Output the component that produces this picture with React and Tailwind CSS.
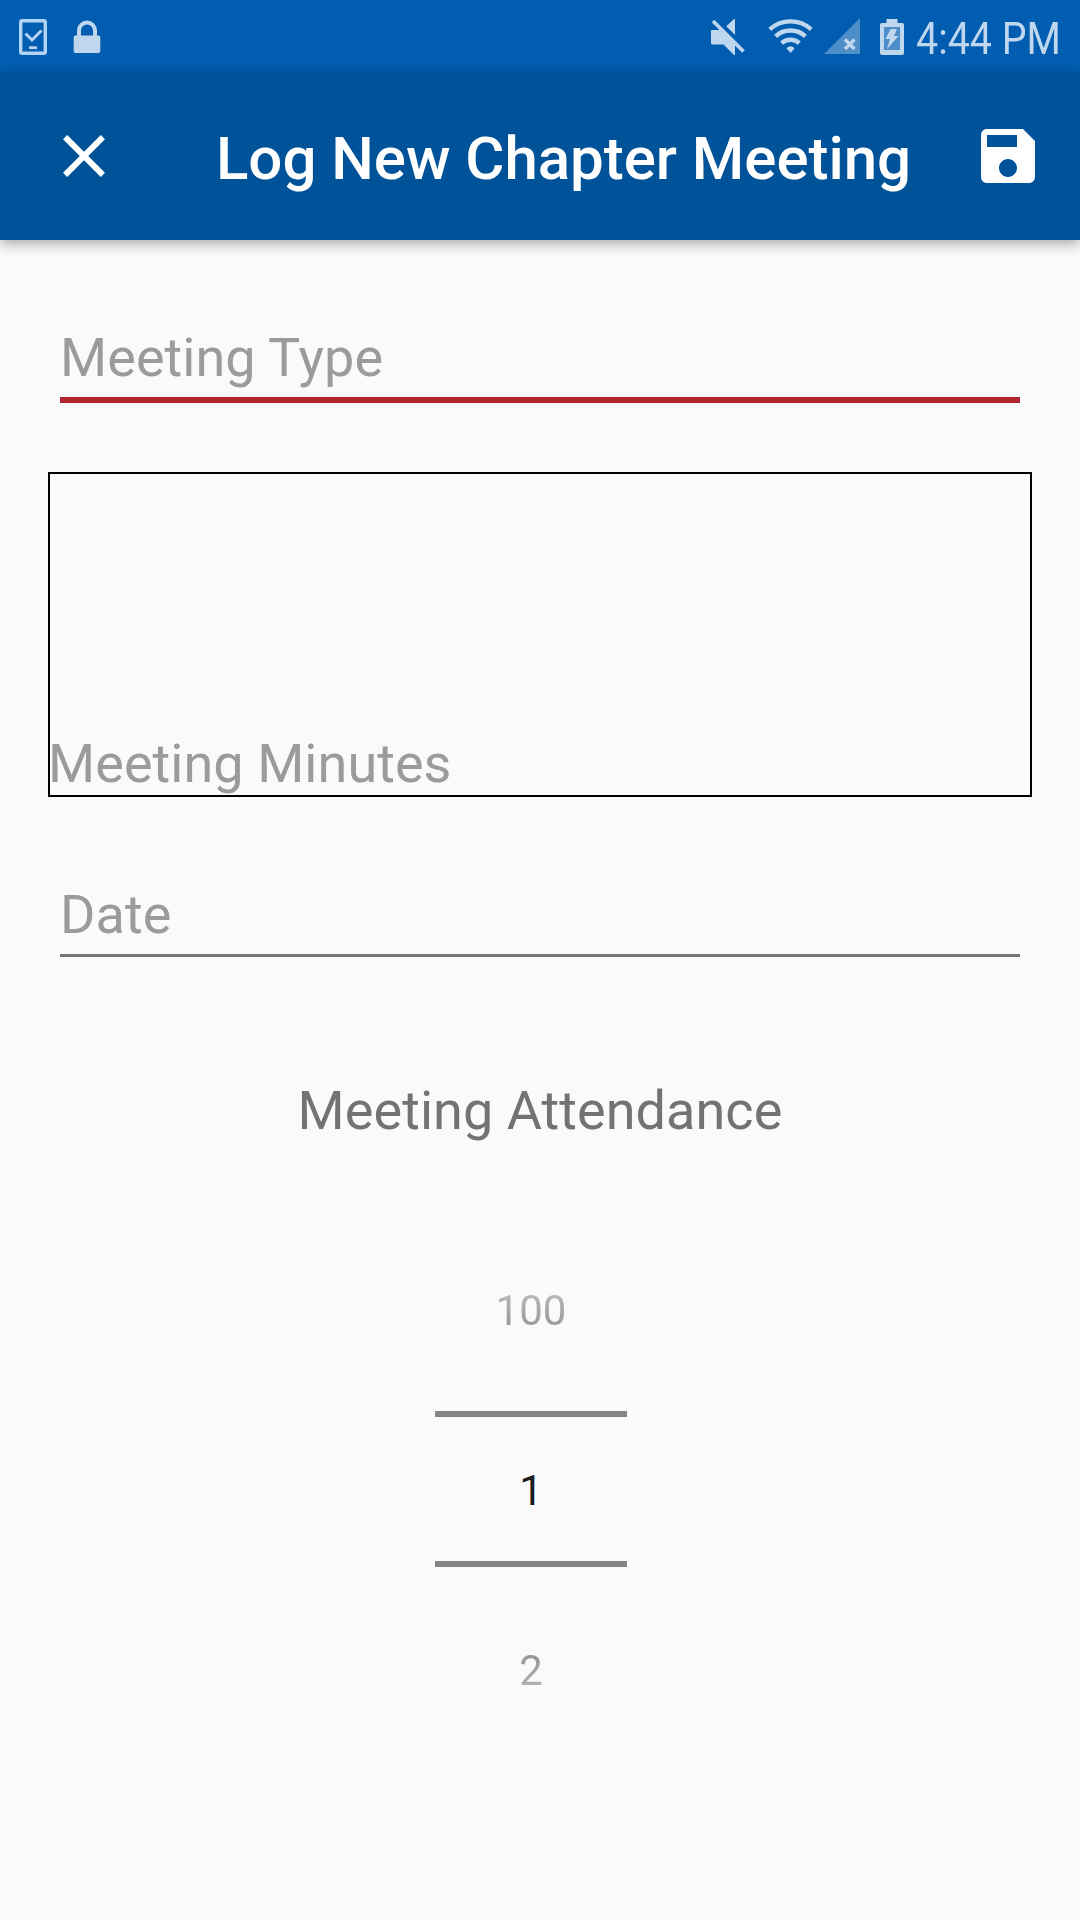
function StatusBar() {
  return (
    <div className="flex h-[72px] items-center bg-[#005db0] pt-0.5 text-[#bfd7ee]">
      <svg className="ml-[19px] h-9 w-7 shrink-0" viewBox="0 0 28 36" fill="none" stroke="#b3d4f7">
        <rect x="1.7" y="1.7" width="24.6" height="32.6" rx="1.6" strokeWidth="3.4" />
        <path d="M6.5 14.5l6.5 6.5 9.500-9.500" strokeWidth="3" />
        <path d="M10 28.700h8" strokeWidth="2.800" />
      </svg>
      <svg className="ml-[26px] h-9 w-7 shrink-0" viewBox="0 0 28 36" fill="none" stroke="currentColor">
        <path d="M6 19v-7.500a8 8 0 0 1 16 0V19" strokeWidth="4" />
        <rect x="0.7" y="16.500" width="26.600" height="17.500" rx="2" fill="currentColor" stroke="none" />
      </svg>
      <svg className="ml-[610px] h-9 w-[34px] shrink-0" viewBox="0 0 34 36" fill="currentColor">
        <path d="M0 12q0-1 1-1h10l13 13v12h-1L12.500 25.500H1q-1 0-1-1z" />
        <path d="M24 0v16l-8.800-8.800L23 0z" />
        <path d="M2 2l30.500 30.500" stroke="#005db0" strokeWidth="6.400" transform="translate(1.500 -1.500)" />
        <path d="M2 2l30.500 30.500" stroke="currentColor" strokeWidth="3.800" />
      </svg>
      <svg className="ml-[23px] h-9 w-[45px] shrink-0" viewBox="0 0 45 36" fill="none" stroke="currentColor" strokeWidth="4.400">
        <path d="M1.800 10.300a31 31 0 0 1 41.400 0" />
        <path d="M7.600 17.300a22 22 0 0 1 29.800 0" />
        <path d="M13.600 24.200a13.300 13.300 0 0 1 17.800 0" />
        <path d="M22.500 34l-4-4.500c2-3 6-3 8 0z" fill="currentColor" stroke="none" />
      </svg>
      <svg className="ml-[11px] h-9 w-9 shrink-0" viewBox="0 1 36 36">
        <path d="M36 0v36H0z" fill="#4d8ec8" />
        <path d="M21 21.500l9.500 9.500M30.500 21.500L21 31" stroke="currentColor" strokeWidth="3.400" />
      </svg>
      <svg className="ml-5 h-9 w-6 shrink-0" viewBox="0 0 24 36">
        <path d="M6.500 0h11v4H22q2 0 2 2v28q0 2-2 2H2q-2 0-2-2V6q0-2 2-2h4.500z" fill="currentColor" />
        <path d="M4 8h16v23H4z" fill="#4d8ec8" />
        <path d="M10.500 10H17l-3 7h4.500L7 30l3-10H5.500z" fill="currentColor" />
      </svg>
      <span className="mt-[3px] ml-3 origin-left scale-x-[0.875] whitespace-nowrap text-[45px] leading-[60px]">4:44 PM</span>
    </div>
  );
}

function Header() {
  return (
    <header className="flex h-[168px] items-center bg-[#005299] pr-9 pl-12 text-white shadow-[0_4px_12px_rgba(0,0,0,0.32)]">
      <svg className="size-[72px]" viewBox="0 0 24 24" fill="currentColor">
        <path d="M19 6.410L17.590 5 12 10.590 6.410 5 5 6.410 10.590 12 5 17.590 6.410 19 12 13.410 17.590 19 19 17.590 13.410 12z" />
      </svg>
      <h1 className="mt-1.5 ml-24 flex-1 whitespace-nowrap text-[60px] leading-[72px] font-medium tracking-[-0.03px]">Log New Chapter Meeting</h1>
      <svg className="size-[72px]" viewBox="0 0 24 24" fill="currentColor">
        <path d="M17 3H5c-1.110 0-2 .9-2 2v14c0 1.100.89 2 2 2h14c1.100 0 2-.9 2-2V7l-4-4zm-5 16c-1.660 0-3-1.340-3-3s1.340-3 3-3 3 1.340 3 3-1.340 3-3 3zm3-10H5V5h10v4z" />
      </svg>
    </header>
  );
}

export default function App() {
  return (
    <div className="flex h-[1920px] w-[1080px] flex-col overflow-hidden bg-[#fafafa] font-['Roboto',sans-serif]">
      <StatusBar />
      <Header />
      <main className="flex flex-col px-12 text-[54px] leading-[64px] tracking-[0.05px] text-[#9b9b9b]">
        <div className="mx-3 mt-[86px] border-b-[6px] border-[#b5242e] pb-[7px]">Meeting Type</div>
        <div className="mt-[69px] flex h-[325px] items-end border-2 border-black leading-[62px]">
          <span className="-ml-0.5">Meeting Minutes</span>
        </div>
        <div className="mx-3 mt-[86px] border-b-[3px] border-[#757575] pb-[7px]">Date</div>
        <h2 className="mt-[122px] text-center text-[#737373]">Meeting Attendance</h2>
        <div className="mt-[143px] ml-[387px] flex w-48 flex-col items-center text-[42px] leading-[50px]">
          <span className="bg-linear-to-b from-[#c0c0c0] to-[#8f8f8f] bg-clip-text text-transparent">100</span>
          <div className="mt-[75px] h-1.5 w-full bg-[#848584]" />
          <span className="mt-[49px] text-[#1c1c1c]">1</span>
          <div className="mt-[45px] h-1.5 w-full bg-[#848484]" />
          <span className="mt-[79px] bg-linear-to-b from-[#8f8f8f] to-[#bababa] bg-clip-text text-transparent">2</span>
        </div>
      </main>
    </div>
  );
}
